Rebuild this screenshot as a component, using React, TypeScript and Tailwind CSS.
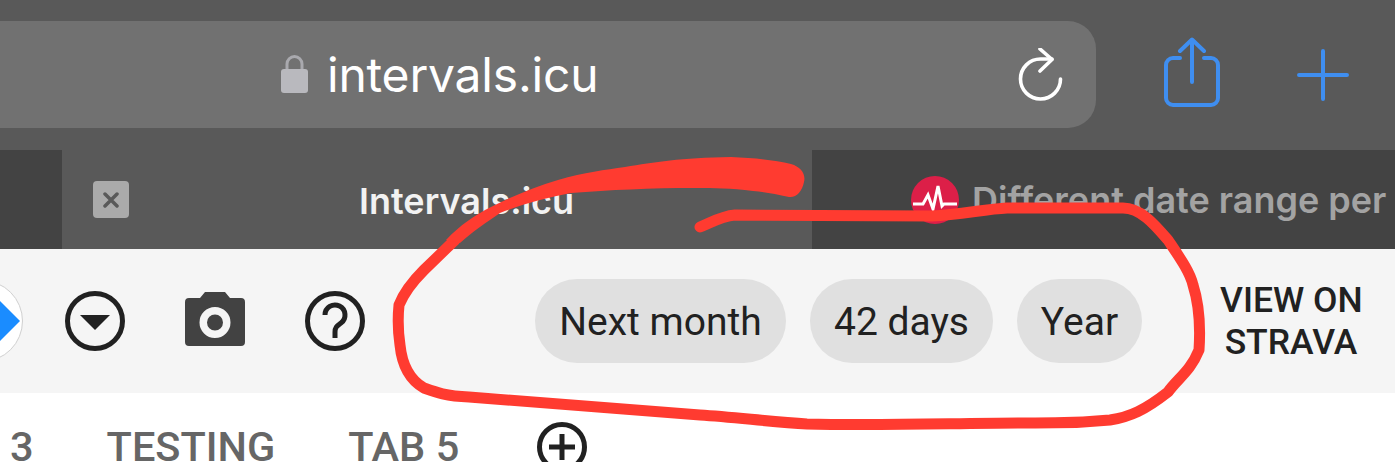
const Home = () => {
  return (
    <main className="relative h-[462px] w-[1395px] overflow-hidden bg-white font-['Roboto',sans-serif]">
      {/* 주소창 */}
      <section className="flex h-[150px] items-start bg-[#595959] pt-[21px]">
        <div className="flex h-[107px] w-[1096px] items-center rounded-r-[28px] bg-[#717171] pl-[281px]">
          <svg width="27" height="40" viewBox="0 0 27 40" className="mt-[-4px]">
            <path d="M6 18V11a7.500 7.500 0 0 1 15 0v7" fill="none" stroke="#a9a9ae" strokeWidth="3" />
            <rect x="0" y="16" width="27" height="24" rx="3" fill="#b9b9be" />
          </svg>
          <span className="ml-[19px] mt-[1px] font-['Inter',sans-serif] text-[48px] leading-none tracking-[-0.2px] text-white">
            intervals.icu
          </span>
          <svg width="46" height="54" viewBox="0 0 46 54" className="ml-[419px]" fill="none" stroke="#fff" strokeWidth="3.6" strokeLinecap="round" strokeLinejoin="round">
            <path d="M43.500 31a20 20 0 1 1-20-20H35" />
            <path d="M23 1 35 11.500 23 23" />
          </svg>
        </div>
        <svg width="56" height="72" viewBox="0 0 56 72" className="ml-[68px] mt-[16px]" fill="none" stroke="#3f8ef0" strokeWidth="4" strokeLinecap="round" strokeLinejoin="round">
          <path d="M16 21H9a7 7 0 0 0-7 7v33a7 7 0 0 0 7 7h38a7 7 0 0 0 7-7V28a7 7 0 0 0-7-7h-7" />
          <path d="M28 45V3M16 14 28 2.500 40 14" />
        </svg>
        <svg width="52" height="52" viewBox="0 0 52 52" className="ml-[77px] mt-[28px]" fill="none" stroke="#3f8ef0" strokeWidth="4" strokeLinecap="round">
          <path d="M26 2v48M2 26h48" />
        </svg>
      </section>

      {/* 브라우저 탭 */}
      <section className="flex h-[99px] bg-[#595959]">
        <div className="w-[62px] bg-[#434343]" />
        <div className="flex w-[750px] items-center pl-[31px]">
          <div className="flex h-[37px] w-[36px] items-center justify-center rounded-[4px] bg-[#aaaaaa]">
            <svg width="16" height="16" viewBox="0 0 16 16" stroke="#595959" strokeWidth="3.5" strokeLinecap="round">
              <path d="M2 2l12 12M14 2 2 14" />
            </svg>
          </div>
          <span className="ml-[230px] mt-[2px] whitespace-nowrap font-['Inter',sans-serif] text-[36px] font-semibold leading-none text-[#f2f2f2]">
            Intervals.icu
          </span>
        </div>
        <div className="flex min-w-0 flex-1 items-center overflow-hidden bg-[#434343] pl-[99px]">
          <svg width="48" height="48" viewBox="0 0 48 48" className="shrink-0">
            <circle cx="24" cy="24" r="24" fill="#dc1f48" />
            <path d="M2 28h10l5-9 5 14 5-23 4 20 2-2h13" fill="none" stroke="#fff" strokeWidth="3" />
          </svg>
          <span className="ml-[13px] whitespace-nowrap font-['Inter',sans-serif] text-[36px] font-semibold leading-none text-[#a3a3a3]">
            Different date range per
          </span>
        </div>
      </section>

      {/* 툴바 */}
      <section className="flex h-[144px] items-center bg-[#f5f5f5]">
        <div className="ml-[-59px] flex h-[82px] w-[82px] shrink-0 items-center justify-end overflow-hidden rounded-full border border-[#d0d0d0] bg-white pr-[2px]">
          <svg width="44" height="44" viewBox="0 0 44 44" className="shrink-0">
            <path d="M22 0 44 22 22 44 0 22z" fill="#1a8cff" />
            <rect x="21" y="20" width="2" height="4" fill="#fff" />
          </svg>
        </div>
        <svg width="60" height="60" viewBox="0 0 60 60" className="ml-[42px] shrink-0">
          <circle cx="30" cy="30" r="27.500" fill="none" stroke="#212121" strokeWidth="5" />
          <path d="M15 24h30L30 39z" fill="#212121" />
        </svg>
        <svg width="60" height="54" viewBox="0 0 60 54" className="ml-[60px] mt-[-5px] shrink-0">
          <path
            fillRule="evenodd"
            d="M20 0h20l5 6h11a4 4 0 0 1 4 4v40a4 4 0 0 1-4 4H4a4 4 0 0 1-4-4V10a4 4 0 0 1 4-4h11zM30 15a15.500 15.500 0 1 0 0 31 15.500 15.500 0 0 0 0-31zM30 22.500a8 8 0 1 1 0 16 8 8 0 0 1 0-16z"
            fill="#424242"
          />
        </svg>
        <svg width="60" height="60" viewBox="0 0 60 60" className="ml-[60px] shrink-0">
          <circle cx="30" cy="30" r="27.500" fill="none" stroke="#212121" strokeWidth="5" />
          <path d="M20 24a10 10 0 1 1 16 8c-4 3-6 4-6 9" fill="none" stroke="#212121" strokeWidth="5" />
          <rect x="27.500" y="41" width="5" height="6" fill="#212121" />
        </svg>

        <div className="ml-[170px] flex shrink-0 gap-6">
          <div className="flex h-[84px] w-[251px] items-center justify-center rounded-full bg-[#e0e0e0] pt-[2px] text-[39px] text-[#212121]">Next month</div>
          <div className="flex h-[84px] w-[183px] items-center justify-center rounded-full bg-[#e0e0e0] pt-[2px] text-[39px] text-[#212121]">42 days</div>
          <div className="flex h-[84px] w-[125px] items-center justify-center rounded-full bg-[#e0e0e0] pt-[2px] text-[39px] text-[#212121]">Year</div>
        </div>

        <div className="ml-[78px] w-[142px] shrink-0 text-center text-[35.500px] font-medium leading-[42px] text-[#212121]">
          <p className="whitespace-nowrap">VIEW ON</p>
          <p>STRAVA</p>
        </div>
      </section>

      {/* 하단 탭 */}
      <section className="flex items-start pl-[10px] pt-[29px] text-[41.500px] font-medium leading-[49px] text-[#666666]">
        <span>3</span>
        <span className="ml-[73px]">TESTING</span>
        <span className="ml-[73px]">TAB 5</span>
        <svg width="50" height="50" viewBox="0 0 50 50" className="ml-[78px] shrink-0">
          <circle cx="25" cy="25" r="22.500" fill="none" stroke="#212121" strokeWidth="5" />
          <path d="M25 12v26M12 25h26" stroke="#212121" strokeWidth="5" />
        </svg>
      </section>

      {/* 빨간 펜 표시 */}
      <svg width="1395" height="462" viewBox="0 0 1395 462" className="pointer-events-none absolute left-0 top-0" fill="none">
        <path
          d="M700 227C712 222 722 216 735 215L932 216C960 215 985 209 1007 208L1123 208C1141 208 1155 225 1168 240C1180 258 1190 272 1193 285C1201 310 1200 335 1199 350C1190 372 1178 378 1168 392C1145 410 1130 417 1110 420C1070 424 1060 422 1030 423C960 423 880 426 807 424C770 422 735 417 700 415L469 397C445 396 435 392 424 388C410 380 402 365 400 345C397 325 398 315 399 305C405 290 414 280 424 270L455 240"
          stroke="#ff3b30"
          strokeWidth="11"
          strokeLinecap="round"
          strokeLinejoin="round"
        />
        <path
          d="M446 240C460 225 475 215 491 207C515 195 535 187 558 180C585 172 605 170 625 167C655 162 680 158 731 157C755 158 775 160 791 164C801 167 806 174 804 182C802 192 796 198 789 197C775 194 765 192 753 191C730 188 715 188 695 188C650 188 610 190 571 193C545 198 520 205 500 213C487 222 472 232 460 243Z"
          fill="#ff3b30"
        />
      </svg>
    </main>
  );
};

export default Home;
